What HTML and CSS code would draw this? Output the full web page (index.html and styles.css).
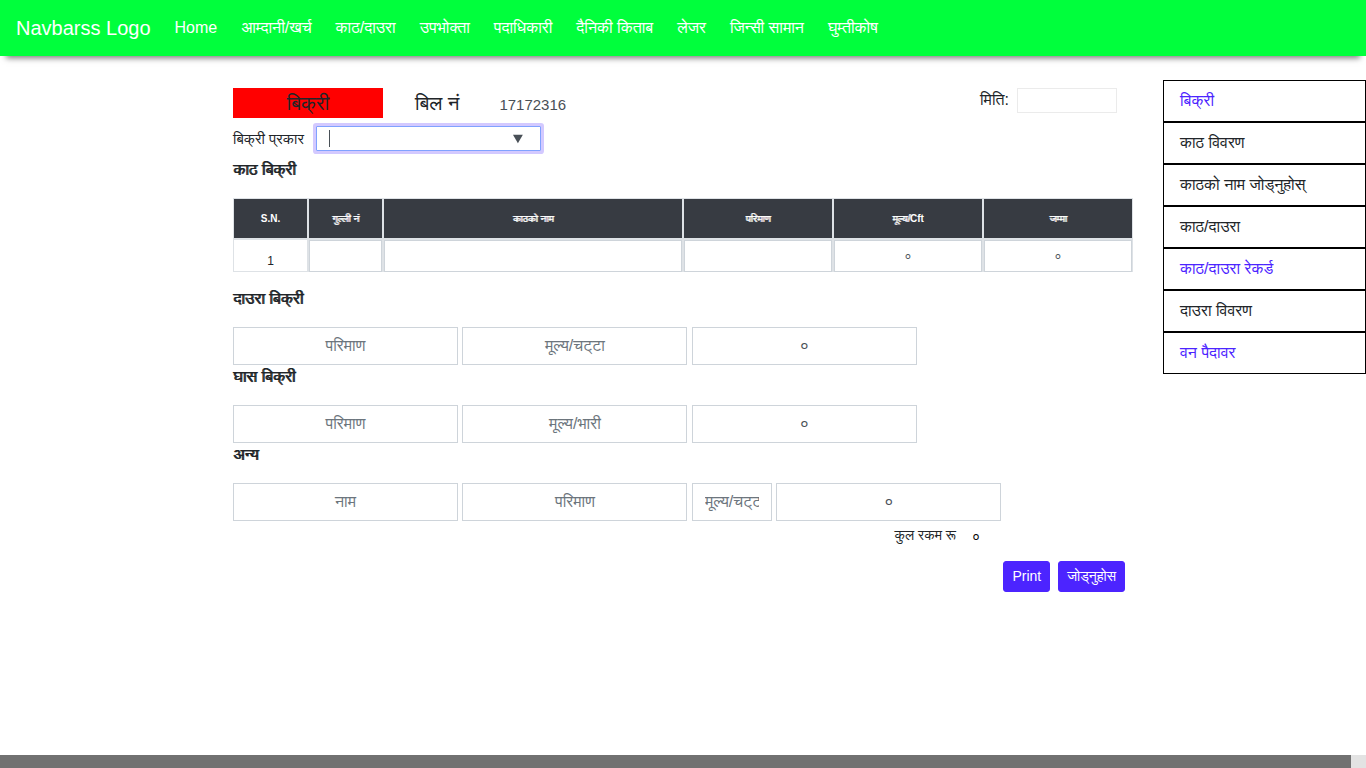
FILE: index.html
```html
<!DOCTYPE html>
<html lang="ne">
<head>
<meta charset="utf-8">
<meta name="viewport" content="width=device-width, initial-scale=1">
<title>बिक्री</title>
<link rel="stylesheet" href="styles.css">
</head>
<body>
<nav class="navbar">
  <a class="brand" href="#">Navbarss Logo</a>
  <a href="#">Home</a>
  <a href="#">आम्दानी/खर्च</a>
  <a href="#">काठ/दाउरा</a>
  <a href="#">उपभोक्&zwj;ता</a>
  <a href="#">पदाधिकारी</a>
  <a href="#">दैनिकी किताब</a>
  <a href="#">लेजर</a>
  <a href="#">जिन्सी सामान</a>
  <a href="#">घुम्तीकोष</a>
</nav>
<div class="layout">
  <main>
    <form class="sale" action="#">
      <div class="bill">
        <h1 class="title">बिक्&zwnj;री</h1>
        <label class="bill-label" for="bill">बिल नं</label>
        <input class="bill-no" id="bill" value="17172316">
        <label class="date-label" for="date">मिति:</label>
        <input class="date" id="date">
      </div>
      <div class="kind-row">
        <label for="kind">बिक्&zwnj;री प्&zwnj;रकार</label>
        <span class="combo"><input class="kind" id="kind" list="kinds" autofocus></span>
        <datalist id="kinds"><option value="आन्तरिक"></option><option value="बाह्य"></option></datalist>
      </div>
      <h2>काठ बिक्&zwnj;री</h2>
      <table>
        <colgroup><col class="c-small"><col class="c-small"><col class="c-name"><col class="c-mid"><col class="c-mid"><col class="c-mid"></colgroup>
        <thead>
          <tr><th class="latin">S.N.</th><th>गुल्&zwj;ली नं</th><th>काठको नाम</th><th>परिमाण</th><th>मूल्य/<span class="latin">Cft</span></th><th>जम्मा</th></tr>
        </thead>
        <tbody>
          <tr>
            <td class="sn">1</td>
            <td><input aria-label="गुल्ली नं"></td>
            <td><input aria-label="काठको नाम"></td>
            <td><input aria-label="परिमाण"></td>
            <td><input aria-label="मूल्य/Cft" value="०"></td>
            <td><input aria-label="जम्मा" value="०"></td>
          </tr>
        </tbody>
      </table>
      <h2>दाउरा बिक्&zwnj;री</h2>
      <div class="fields">
        <input placeholder="परिमाण" aria-label="दाउरा परिमाण">
        <input placeholder="मूल्य/चट्&zwnj;टा" aria-label="दाउरा मूल्य">
        <input value="०" aria-label="दाउरा जम्मा">
      </div>
      <h2>घास बिक्&zwnj;री</h2>
      <div class="fields">
        <input placeholder="परिमाण" aria-label="घास परिमाण">
        <input placeholder="मूल्य/भारी" aria-label="घास मूल्य">
        <input value="०" aria-label="घास जम्मा">
      </div>
      <h2>अन्य</h2>
      <div class="fields">
        <input placeholder="नाम" aria-label="नाम">
        <input placeholder="परिमाण" aria-label="अन्य परिमाण">
        <input class="short" placeholder="मूल्य/चट्&zwnj;टा" aria-label="अन्य मूल्य">
        <input value="०" aria-label="अन्य जम्मा">
      </div>
      <div class="total">
        <label for="total">कुल रकम रू</label>
        <input id="total" value="०">
      </div>
      <div class="actions">
        <button type="button">Print</button>
        <button type="button">जोड्नुहोस</button>
      </div>
    </form>
  </main>
  <aside class="side">
    <a class="link" href="#">बिक्&zwnj;री</a>
    <a href="#">काठ विवरण</a>
    <a href="#">काठको नाम जोड्नुहोस्</a>
    <a href="#">काठ/दाउरा</a>
    <a class="link" href="#">काठ/दाउरा रेकर्ड</a>
    <a href="#">दाउरा विवरण</a>
    <a class="link" href="#">वन पैदावर</a>
  </aside>
</div>
<div class="scrollbar"><div class="thumb"></div></div>
</body>
</html>
```
FILE: styles.css
```css
* { box-sizing: border-box; }
body {
  margin: 0;
  min-height: 100vh;
  display: flex;
  flex-direction: column;
  font: 16px/24px "Liberation Sans", FreeSans, "Noto Sans", sans-serif;
  color: #212529;
  background: #fff;
}
a { color: inherit; text-decoration: none; }
input, button { font: inherit; }
input {
  min-width: 0;
  margin: 0;
  color: #495057;
  background: #fff;
  border: 1px solid #ced4da;
  border-radius: 0;
  outline: 0;
}
input::placeholder { color: #6c757d; opacity: 1; }

.navbar {
  display: flex;
  align-items: center;
  gap: 24px;
  height: 56px;
  padding: 0 16px;
  color: #fff;
  background: #00ff3c;
  box-shadow: 0 8px 6px -6px #777;
}
.brand { font-size: 20px; line-height: 30px; }

.layout {
  display: grid;
  grid-template-columns: 900fr 203fr;
  column-gap: 30px;
  align-items: start;
  padding: 24px 0 24px 233px;
}
.sale { padding-top: 8px; }

.bill { display: flex; align-items: flex-start; }
.title {
  width: 150px;
  margin: 0 32px 0 0;
  font-size: 20px;
  line-height: 30px;
  font-weight: 400;
  text-align: center;
  background: #f00;
}
.bill-label { font-size: 20px; line-height: 30px; }
.bill-no {
  width: 120px;
  height: 32px;
  margin-left: 40px;
  padding: 0;
  font-size: 15px;
  border: 0;
}
.date-label { margin-left: auto; }
.date {
  width: 100px;
  height: 25px;
  margin: 0 16px 0 8px;
  border-color: #ebebeb;
}

.kind-row {
  display: flex;
  align-items: center;
  gap: 12px;
  margin: 6px 0 7px;
  font-size: 15px;
}
.combo { position: relative; display: flex; }
.combo:focus-within::before {
  content: "";
  position: absolute;
  left: 13px;
  top: 4px;
  width: 1px;
  height: 17px;
  background: #495057;
}
.kind {
  width: 225px;
  height: 25px;
  padding: 0 12px;
  line-height: 16px;
  caret-color: transparent;
}
.kind:focus {
  border-color: #80a2ff;
  border-radius: 1px;
  box-shadow: 0 0 0 3px #d3c9ff;
}

/* Devanagari emphasis: the regular face, thickened by one pixel */
h2, th {
  font-weight: 400;
  text-shadow: 1px 0 currentColor;
}
.latin { font-weight: 700; text-shadow: none; }
h2 {
  margin: 0 0 16px;
  font-size: 16px;
  line-height: 24px;
}

table {
  width: 100%;
  margin-bottom: 15px;
  table-layout: fixed;
  border-collapse: separate;
  border-spacing: 0;
  text-align: center;
}
.c-small { width: 8.3333%; }
.c-mid { width: 16.6667%; }
th {
  height: 41px;
  padding: 0;
  font-size: 10px;
  line-height: 15px;
  color: #fff;
  background: #373b42;
  border: 1px solid #dee2e6;
}
td {
  height: 33px;
  padding: 0;
  font-size: 12px;
  line-height: 18px;
  background: #dee2e6;
}
td input {
  display: block;
  width: calc(100% - 2px);
  height: 32px;
  margin: 1px 1px 0;
  padding: 0 12px;
  text-align: center;
}
.sn {
  padding-top: 10px;
  background: #fff;
  border: 1px solid #dee2e6;
}

.fields input {
  width: 225px;
  height: 38px;
  padding: 6px 12px;
  text-align: center;
  vertical-align: top;
}
.fields .short { width: 80px; }

.total {
  display: flex;
  justify-content: flex-end;
  gap: 16px;
  padding-top: 4px;
  font-size: 14px;
  line-height: 21px;
}
.total input {
  width: 161px;
  height: 22px;
  padding: 0;
  color: #000;
  border: 0;
}
.actions {
  display: flex;
  justify-content: flex-end;
  gap: 8px;
  padding: 14px 8px 0 0;
}
button {
  padding: 5px 8px;
  font-size: 14px;
  line-height: 19px;
  color: #fff;
  background: #4c24ff;
  border: 1px solid #4c24ff;
  border-radius: 3px;
}

.side { display: flex; flex-direction: column; }
.side a { padding: 8px 16px; border: 1px solid #000; }
.side .link { color: #4c24ff; }

.scrollbar { margin-top: auto; height: 13px; padding-right: 15px; background: #e3e3e3; }
.thumb { height: 100%; background: #717171; }
```
